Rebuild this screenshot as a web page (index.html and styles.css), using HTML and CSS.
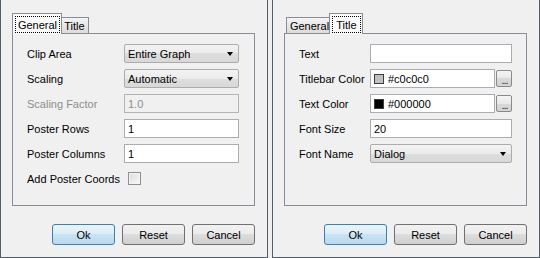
FILE: index.html
```html
<!DOCTYPE html>
<html lang="en">
<head>
    <meta charset="UTF-8">
    <link rel="stylesheet" href="styles.css">
    <title>Poster Options</title>
</head>
<body>
    <div class="dialogs">

        <!-- General tab selected -->
        <div class="dialog">
            <div class="tabs">
                <div class="tab tab-general active"><span class="focus">General</span></div>
                <div class="tab tab-title"><span class="focus">Title</span></div>
            </div>
            <div class="panel">
                <div class="form form-general">
                    <span class="label">Clip Area</span>
                    <div class="combo">Entire Graph<span class="arrow"></span></div>

                    <span class="label">Scaling</span>
                    <div class="combo">Automatic<span class="arrow"></span></div>

                    <span class="label disabled">Scaling Factor</span>
                    <div class="field disabled">1.0</div>

                    <span class="label">Poster Rows</span>
                    <div class="field">1</div>

                    <span class="label">Poster Columns</span>
                    <div class="field">1</div>

                    <span class="label">Add Poster Coords</span>
                    <div class="check-cell"><span class="checkbox"></span></div>
                </div>
            </div>
            <div class="buttons">
                <button class="button default">Ok</button>
                <button class="button">Reset</button>
                <button class="button">Cancel</button>
            </div>
        </div>

        <!-- Title tab selected -->
        <div class="dialog">
            <div class="tabs">
                <div class="tab tab-general"><span class="focus">General</span></div>
                <div class="tab tab-title active"><span class="focus">Title</span></div>
            </div>
            <div class="panel">
                <div class="form form-title">
                    <span class="label">Text</span>
                    <div class="field"></div>

                    <span class="label">Titlebar Color</span>
                    <div class="color-row">
                        <div class="field color-field"><span class="swatch" style="background-color: #c0c0c0;"></span>#c0c0c0</div>
                        <button class="more">...</button>
                    </div>

                    <span class="label">Text Color</span>
                    <div class="color-row">
                        <div class="field color-field"><span class="swatch" style="background-color: #000000;"></span>#000000</div>
                        <button class="more">...</button>
                    </div>

                    <span class="label">Font Size</span>
                    <div class="field">20</div>

                    <span class="label">Font Name</span>
                    <div class="combo">Dialog<span class="arrow"></span></div>
                </div>
            </div>
            <div class="buttons">
                <button class="button default">Ok</button>
                <button class="button">Reset</button>
                <button class="button">Cancel</button>
            </div>
        </div>

    </div>
</body>
</html>
```

FILE: styles.css
```css
* {
    margin: 0;
    padding: 0;
    box-sizing: border-box;
}

body {
    font-family: 'Liberation Sans', Arial, sans-serif;
    font-size: 11px;
    color: #000;
    background-color: #eeeeee;
}

.dialogs {
    display: flex;
    gap: 4px;
    width: 540px;
    height: 258px;
}

.dialog {
    width: 268px;
    height: 258px;
    background-color: #f0f0f0;
    border: 1px solid #525d6a;
    border-top: none;
    padding: 13px 12px 0 11px;
}

/* Tab strip */
.tabs {
    display: flex;
    align-items: flex-end;
    height: 20px;
    padding-left: 2px;
}

.tab {
    height: 16px;
    border: 1px solid #898c95;
    border-bottom: none;
    background: linear-gradient(#f4f4f4, #e6e6e6 55%, #dcdcdc);
    padding: 1px 1px 0 2px;
    position: relative;
}

.tab-general { width: 46px; }
.tab-title { width: 30px; margin-left: -1px; }

.tab .focus {
    display: flex;
    align-items: center;
    justify-content: center;
    height: 100%;
    border: 1px solid transparent;
}

.tab.active {
    height: 21px;
    margin: 0 -2px -1px -2px;
    background: #fbfbfb;
    z-index: 1;
    padding: 2px 1px 1px 2px;
}

.tab-general.active { width: 50px; }
.tab-title.active { width: 34px; margin-left: -3px; }

.tab.active .focus {
    border: 1px dotted #000;
}

/* Content panel */
.panel {
    height: 173px;
    border: 1px solid #898c95;
    background-color: #f0f0f0;
    padding: 10px 0 0 14px;
}

.form {
    display: grid;
    row-gap: 6px;
    align-items: center;
}

.form-general { grid-template-columns: 97px 115px; }
.form-title { grid-template-columns: 71px 142px; }

.label {
    white-space: nowrap;
}

.label.disabled {
    color: #8d8d8d;
}

.field {
    height: 19px;
    border: 1px solid #abadb3;
    background-color: #fff;
    padding-left: 3px;
    display: flex;
    align-items: center;
}

.field.disabled {
    background-color: #f0f0f0;
    border-color: #b4b4b4;
    color: #8d8d8d;
}

.combo {
    height: 19px;
    border: 1px solid #acacac;
    border-radius: 2px;
    background: linear-gradient(#f3f3f3, #ebebeb 50%, #dedede 50%, #d8d8d8);
    padding-left: 3px;
    display: flex;
    align-items: center;
    position: relative;
}

.combo .arrow {
    position: absolute;
    right: 5px;
    top: 7px;
    width: 0;
    height: 0;
    border-left: 3.5px solid transparent;
    border-right: 3.5px solid transparent;
    border-top: 4px solid #000;
}

.check-cell {
    height: 19px;
    display: flex;
    align-items: center;
    padding-left: 4px;
}

.checkbox {
    width: 13px;
    height: 13px;
    border: 1px solid #8e8f8f;
    background: linear-gradient(135deg, #dcdcdc, #f8f8f8);
    box-shadow: inset 0 0 0 1px #f4f4f4;
}

/* Color picker rows */
.color-row {
    display: flex;
    align-items: center;
    gap: 1px;
}

.color-field {
    width: 126px;
}

.swatch {
    width: 10px;
    height: 10px;
    border: 1px solid #3c3c3c;
    margin-right: 4px;
}

.more {
    width: 16px;
    height: 17px;
    border: 1px solid #8a8a8a;
    border-radius: 2px;
    background: linear-gradient(#f4f4f4, #e8e8e8 50%, #d9d9d9 50%, #d2d2d2);
    font-family: 'Liberation Sans', Arial, sans-serif;
    font-size: 11px;
    color: #1c2a4a;
    line-height: 18px;
    letter-spacing: -1px;
    padding-left: 1px;
}

/* Bottom buttons */
.buttons {
    display: flex;
    justify-content: flex-end;
    gap: 7px;
    margin-top: 18px;
}

.button {
    width: 63px;
    height: 21px;
    border: 1px solid #707070;
    border-radius: 3px;
    background: linear-gradient(#f2f2f2, #ebebeb 50%, #dddddd 50%, #cfcfcf);
    font-family: 'Liberation Sans', Arial, sans-serif;
    font-size: 11px;
    color: #000;
}

.button.default {
    border-color: #3c7fb1;
    background: linear-gradient(#eaf4fb, #dcecf8 50%, #c9e2f5 50%, #bcd9f0);
}
```
